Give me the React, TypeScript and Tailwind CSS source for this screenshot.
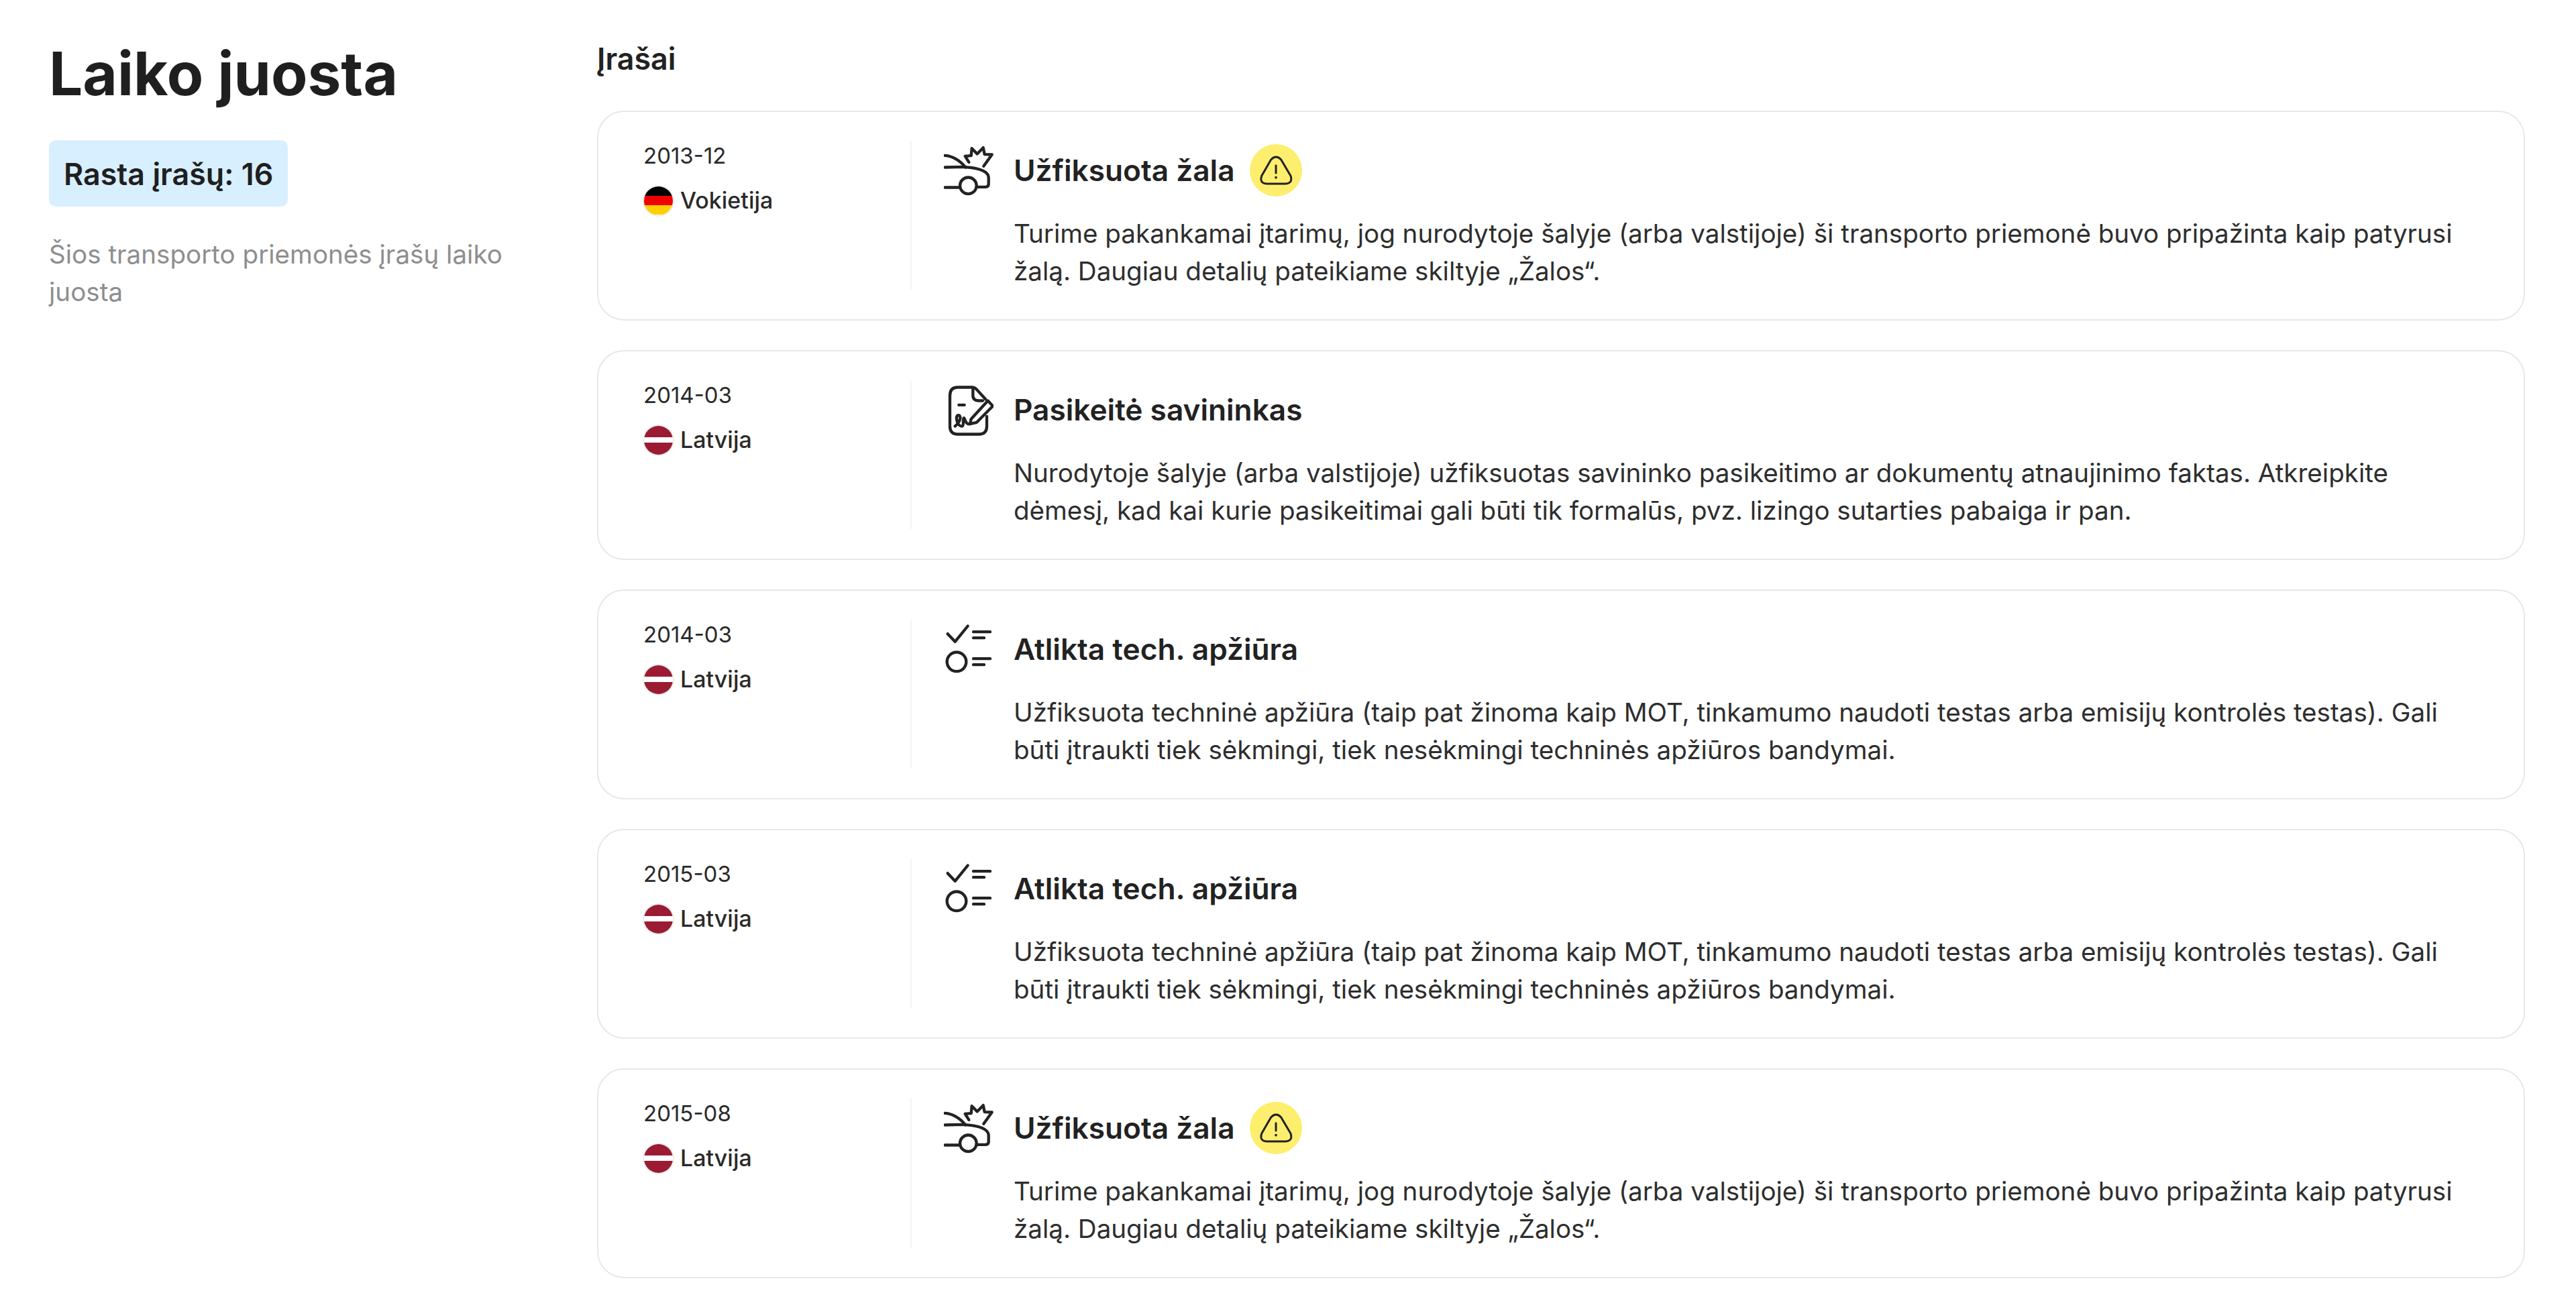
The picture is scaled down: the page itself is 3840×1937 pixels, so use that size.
const font = { fontFamily: "Inter, sans-serif" };

type Entry = {
  date: string;
  country: "de" | "lv";
  kind: "damage" | "owner" | "inspection";
};

const COPY = {
  damage: {
    title: "Užfiksuota žala",
    body: "Turime pakankamai įtarimų, jog nurodytoje šalyje (arba valstijoje) ši transporto priemonė buvo pripažinta kaip patyrusi žalą. Daugiau detalių pateikiame skiltyje „Žalos“.",
  },
  owner: {
    title: "Pasikeitė savininkas",
    body: "Nurodytoje šalyje (arba valstijoje) užfiksuotas savininko pasikeitimo ar dokumentų atnaujinimo faktas. Atkreipkite dėmesį, kad kai kurie pasikeitimai gali būti tik formalūs, pvz. lizingo sutarties pabaiga ir pan.",
  },
  inspection: {
    title: "Atlikta tech. apžiūra",
    body: "Užfiksuota techninė apžiūra (taip pat žinoma kaip MOT, tinkamumo naudoti testas arba emisijų kontrolės testas). Gali būti įtraukti tiek sėkmingi, tiek nesėkmingi techninės apžiūros bandymai.",
  },
};

const ENTRIES: Entry[] = [
  { date: "2013-12", country: "de", kind: "damage" },
  { date: "2014-03", country: "lv", kind: "owner" },
  { date: "2014-03", country: "lv", kind: "inspection" },
  { date: "2015-03", country: "lv", kind: "inspection" },
  { date: "2015-08", country: "lv", kind: "damage" },
];

function DamageIcon() {
  return (
    <svg width="74" height="77" viewBox="88 50 222 230" fill="none" stroke="#222" strokeWidth="13" strokeLinecap="round" strokeLinejoin="round">
      <path d="M93 97C130 100 160 120 185 150" />
      <path d="M93 150L170 148C220 150 285 160 288 195V225Q288 238 275 238H238" />
      <circle cx="197" cy="232" r="37" />
      <path d="M93 240H158" />
      <path d="M200 127L183 100L210 98L213 65L237 90L264 62L270 92L303 93L266 145" />
    </svg>
  );
}

function OwnerIcon() {
  return (
    <svg width="74" height="77" viewBox="88 35 222 230" fill="none" stroke="#222" strokeWidth="13" strokeLinecap="round" strokeLinejoin="round">
      <path d="M280 178V222Q280 258 245 258H150Q115 258 115 222V85Q115 48 150 48H215Q225 48 235 58L275 102" />
      <path d="M218 55V85Q218 108 245 108H262" />
      <path d="M155 127H180" />
      <path d="M210 190L285 108L307 132L235 205L205 212Z" />
      <path d="M138 222C160 205 170 175 152 173C135 178 150 225 170 222C180 218 170 190 178 185C185 195 185 215 205 212" />
    </svg>
  );
}

function InspectionIcon() {
  return (
    <svg width="74" height="77" viewBox="88 35 222 230" fill="none" stroke="#222" strokeWidth="13" strokeLinecap="round" strokeLinejoin="round">
      <path d="M105 80L138 115L195 45" />
      <path d="M220 71H295M220 98H268" />
      <circle cx="145" cy="205" r="43" />
      <path d="M220 191H295M220 218H268" />
    </svg>
  );
}

function WarningBadge() {
  return (
    <span className="ml-[22px] flex h-[78px] w-[78px] shrink-0 items-center justify-center rounded-full bg-[#fdee6d]">
      <svg width="50" height="50" viewBox="107 85 150 150" fill="none" stroke="#222" strokeWidth="9" strokeLinecap="round" strokeLinejoin="round">
        <path d="M160 112Q183 88 205 112L248 185Q258 218 225 220H140Q108 218 118 185Z" />
        <path d="M182 138V172" />
        <path d="M182 192V192.5" strokeWidth="11" />
      </svg>
    </span>
  );
}

function Flag({ country }: { country: Entry["country"] }) {
  return (
    <span className="-ml-[1px] flex h-[47px] w-[47px] shrink-0 flex-col overflow-hidden rounded-full border-2 border-[#eeeeee]">
      {country === "de" ? (
        <>
          <span className="flex-1 bg-[#000000]" />
          <span className="flex-1 bg-[#f00000]" />
          <span className="flex-1 bg-[#ffcf00]" />
        </>
      ) : (
        <>
          <span className="flex-[2] bg-[#9b1b33]" />
          <span className="flex-1 bg-white" />
          <span className="flex-[2] bg-[#9b1b33]" />
        </>
      )}
    </span>
  );
}

function EntryCard({ entry }: { entry: Entry }) {
  const copy = COPY[entry.kind];
  return (
    <li className="flex h-[313px] rounded-[40px] border-2 border-[#e8e8e8] pl-[67px] pr-[66px] pt-[43px]">
      <div className="h-[222px] w-[400px] shrink-0 border-r-2 border-[#f3f3f3]">
        <p className="-mt-[3px] text-[33px] leading-[50px] text-[#2a2a2a]">{entry.date}</p>
        <div className="mt-[17px] flex items-center gap-[9px]">
          <Flag country={entry.country} />
          <span className="text-[34px] font-medium leading-[50px] text-[#2a2a2a]">
            {entry.country === "de" ? "Vokietija" : "Latvija"}
          </span>
        </div>
      </div>
      <div className="min-w-0 flex-1 pl-[48px]">
        <div className="mt-[4px] flex h-[80px] items-center">
          <span className="mr-[30px] flex w-[74px] shrink-0">
            {entry.kind === "damage" && <DamageIcon />}
            {entry.kind === "owner" && <OwnerIcon />}
            {entry.kind === "inspection" && <InspectionIcon />}
          </span>
          <h3 className="text-[44.2px] font-semibold text-[#222222]">{copy.title}</h3>
          {entry.kind === "damage" && <WarningBadge />}
        </div>
        <p className="ml-[104px] mt-[26px] text-[38.55px] leading-[56px] text-[#2e2e2e]">{copy.body}</p>
      </div>
    </li>
  );
}

export default function App() {
  return (
    <div style={font} className="flex min-h-[1937px] bg-white">
      <aside className="w-[890px] shrink-0 pl-[73px] pr-[70px] pt-[54px]">
        <h1 className="text-[89px] font-bold leading-[112px] text-[#1f1f1f]">Laiko juosta</h1>
        <div className="mt-[43px] inline-block rounded-[10px] bg-[#d8efff] px-[22px] pb-[20px] pt-[24px] text-[44.8px] font-semibold leading-[55px] text-[#1f1f1f]">
          Rasta įrašų: 16
        </div>
        <p className="mt-[43px] text-[38.6px] leading-[56px] text-[#8e8e8e]">
          Šios transporto priemonės įrašų laiko juosta
        </p>
      </aside>
      <main className="w-[2874px] shrink-0 pt-[60px]">
        <h2 className="text-[44.8px] font-semibold leading-[56px] text-[#222222]">Įrašai</h2>
        <ul className="mt-[49px] flex flex-col gap-[44px]">
          {ENTRIES.map((entry, i) => (
            <EntryCard key={i} entry={entry} />
          ))}
        </ul>
      </main>
    </div>
  );
}
